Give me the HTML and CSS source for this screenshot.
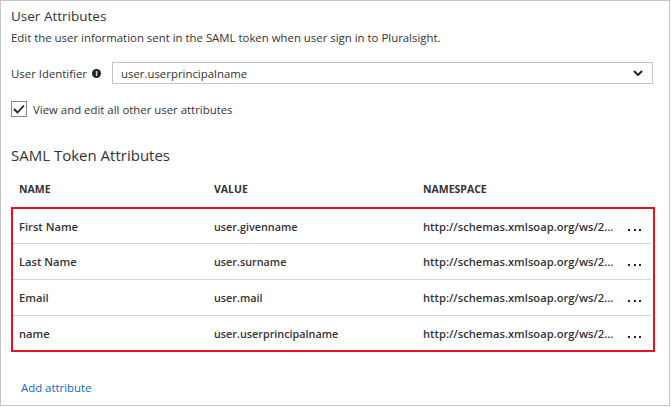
FILE: index.html
```html
<!DOCTYPE html>
<html>
<head>
<meta charset="utf-8">
<link rel="stylesheet" href="styles.css">
</head>
<body>
<div class="panel">
  <h1 class="title">User Attributes</h1>
  <p class="desc">Edit the user information sent in the SAML token when user sign in to Pluralsight.</p>
  <div class="field">
    <span class="label">User Identifier <span class="info">i</span></span>
    <div class="select">
      <span>user.userprincipalname</span>
      <svg class="chev" width="10" height="6" viewBox="0 0 10 6"><path d="M1 1 L5 5 L9 1" fill="none" stroke="#222" stroke-width="2"/></svg>
    </div>
  </div>
  <div class="check">
    <span class="box"><svg width="12" height="10" viewBox="0 0 12 10"><path d="M1 5 L4.5 8.5 L11 1.5" fill="none" stroke="#222" stroke-width="1.8"/></svg></span>
    <span>View and edit all other user attributes</span>
  </div>
  <h2 class="subtitle">SAML Token Attributes</h2>
  <div class="thead">
    <span>NAME</span><span>VALUE</span><span>NAMESPACE</span>
  </div>
  <div class="rows">
    <div class="row"><span>First Name</span><span>user.givenname</span><span>http://schemas.xmlsoap.org/ws/2...</span><span class="more"><i></i><i></i><i></i></span></div>
    <div class="row"><span>Last Name</span><span>user.surname</span><span>http://schemas.xmlsoap.org/ws/2...</span><span class="more"><i></i><i></i><i></i></span></div>
    <div class="row"><span>Email</span><span>user.mail</span><span>http://schemas.xmlsoap.org/ws/2...</span><span class="more"><i></i><i></i><i></i></span></div>
    <div class="row"><span>name</span><span>user.userprincipalname</span><span>http://schemas.xmlsoap.org/ws/2...</span><span class="more"><i></i><i></i><i></i></span></div>
  </div>
  <a class="add" href="#">Add attribute</a>
</div>
</body>
</html>
```
FILE: styles.css
```css
* { box-sizing: border-box; }
body {
  margin: 0;
  font-family: "Open Sans", "Noto Sans", sans-serif;
  color: #333;
  background: #fff;
}
.panel {
  width: 670px;
  height: 406px;
  border: 1px solid #c6c6c6;
  padding: 6px 0 0 10px;
}
.title {
  margin: 0;
  font-size: 13.5px;
  font-weight: normal;
  line-height: 18px;
}
.desc {
  margin: 4px 0 0;
  font-size: 11.4px;
  line-height: 17px;
}
.field {
  display: flex;
  align-items: center;
  margin-top: 16px;
}
.label {
  width: 101px;
  font-size: 11.4px;
  display: flex;
  align-items: center;
  gap: 5px;
}
.info {
  display: inline-flex;
  width: 9px;
  height: 9px;
  border-radius: 50%;
  background: #222;
  color: #fff;
  font-size: 7px;
  font-weight: bold;
  align-items: center;
  justify-content: center;
  line-height: 1;
}
.select {
  width: 541px;
  height: 22px;
  border: 1px solid #c6c6c6;
  display: flex;
  align-items: center;
  justify-content: space-between;
  padding: 0 9px 0 8px;
  font-size: 11.4px;
}
.check {
  display: flex;
  align-items: center;
  gap: 6px;
  margin-top: 17px;
  font-size: 11.4px;
}
.box {
  width: 16px;
  height: 16px;
  border: 1px solid #888;
  display: flex;
  align-items: center;
  justify-content: center;
}
.subtitle {
  margin: 28px 0 0;
  font-size: 15px;
  font-weight: normal;
  line-height: 20px;
}
.thead {
  display: grid;
  grid-template-columns: 195px 209px 1fr;
  padding-left: 8px;
  margin-top: 17px;
  font-size: 10.5px;
  font-weight: bold;
  line-height: 14px;
}
.rows {
  width: 644px;
  margin-top: 11px;
  border: 2px solid #e81123;
  padding: 0 2px 0 0;
}
.row {
  display: grid;
  grid-template-columns: 195px 209px 205px 1fr;
  align-items: center;
  padding-left: 6px;
  height: 36px;
  border-top: 1px solid #d6d6d6;
  font-size: 11.2px;
  font-weight: 600;
}
.row span:nth-child(2) { font-size: 10.8px; }
.row:first-child { border-top: none; height: 34px; }
.row:last-child { height: 35px; }
.more {
  display: flex;
  gap: 3.5px;
  align-self: center;
  padding-top: 7px;
}
.more i {
  width: 2px;
  height: 2px;
  background: #222;
}
.add {
  display: inline-block;
  margin: 28px 0 0 10px;
  color: #0f68c0;
  text-decoration: none;
  font-size: 11.4px;
}
```
